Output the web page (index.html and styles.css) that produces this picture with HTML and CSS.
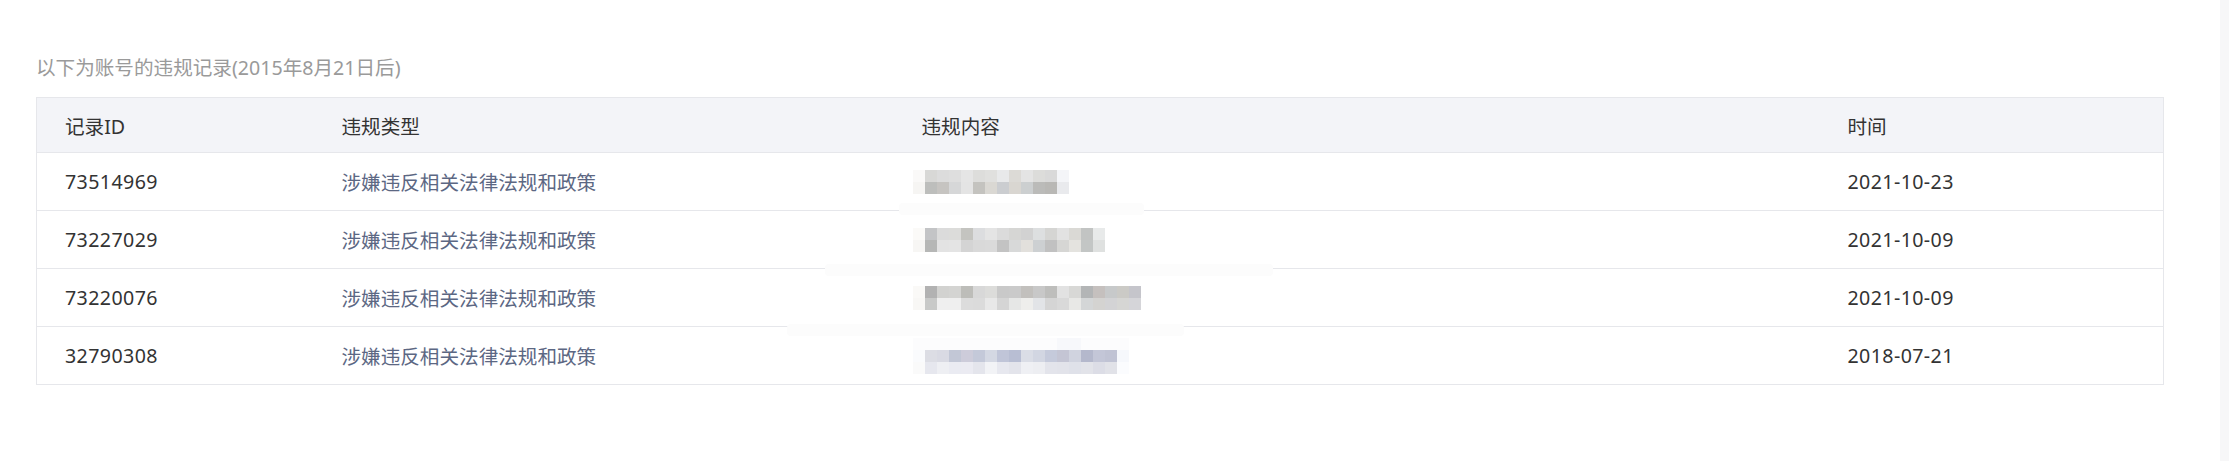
FILE: index.html
```html
<!DOCTYPE html>
<html lang="zh-CN">
<head>
  <meta charset="UTF-8">
  <meta name="viewport" content="width=device-width, initial-scale=1.0">
  <title>违规记录</title>
  <link rel="stylesheet" href="styles.css">
</head>
<body>
  <main class="page">
    <p class="notice">以下为账号的违规记录(2015年8月21日后)</p>

    <table class="record-table">
      <colgroup>
        <col class="col-id">
        <col class="col-type">
        <col class="col-content">
        <col>
      </colgroup>
      <thead>
        <tr>
          <th>记录ID</th>
          <th>违规类型</th>
          <th>违规内容</th>
          <th>时间</th>
        </tr>
      </thead>
      <tbody>
        <tr>
          <td class="num">73514969</td>
          <td class="type">涉嫌违反相关法律法规和政策</td>
          <td class="content">
            <svg class="blur" width="156" height="24" shape-rendering="crispEdges">
              <rect x="0" y="0" width="12" height="12" fill="#faf9f8"/>
              <rect x="12" y="0" width="12" height="12" fill="#d8d8d6"/>
              <rect x="24" y="0" width="12" height="12" fill="#dcdcdc"/>
              <rect x="36" y="0" width="12" height="12" fill="#dedede"/>
              <rect x="48" y="0" width="12" height="12" fill="#e5e5e5"/>
              <rect x="60" y="0" width="12" height="12" fill="#dddddb"/>
              <rect x="72" y="0" width="12" height="12" fill="#e0e0de"/>
              <rect x="84" y="0" width="12" height="12" fill="#e8e9ea"/>
              <rect x="96" y="0" width="12" height="12" fill="#dcdad6"/>
              <rect x="108" y="0" width="12" height="12" fill="#e4e4e4"/>
              <rect x="120" y="0" width="12" height="12" fill="#dcdcda"/>
              <rect x="132" y="0" width="12" height="12" fill="#d9d9d9"/>
              <rect x="144" y="0" width="12" height="12" fill="#f4f5f8"/>
              <rect x="0" y="12" width="12" height="12" fill="#f6f5f3"/>
              <rect x="12" y="12" width="12" height="12" fill="#bdbebc"/>
              <rect x="24" y="12" width="12" height="12" fill="#c6c4c1"/>
              <rect x="36" y="12" width="12" height="12" fill="#d6d7d8"/>
              <rect x="48" y="12" width="12" height="12" fill="#e4e4e4"/>
              <rect x="60" y="12" width="12" height="12" fill="#c4c3bf"/>
              <rect x="72" y="12" width="12" height="12" fill="#dad8d3"/>
              <rect x="84" y="12" width="12" height="12" fill="#cbcdd0"/>
              <rect x="96" y="12" width="12" height="12" fill="#d9d6d1"/>
              <rect x="108" y="12" width="12" height="12" fill="#cccfd0"/>
              <rect x="120" y="12" width="12" height="12" fill="#bbbbb9"/>
              <rect x="132" y="12" width="12" height="12" fill="#b9b8b5"/>
              <rect x="144" y="12" width="12" height="12" fill="#e9eaed"/>
            </svg>
            <span class="smudge smudge-1"></span>
          </td>
          <td class="num">2021-10-23</td>
        </tr>
        <tr>
          <td class="num">73227029</td>
          <td class="type">涉嫌违反相关法律法规和政策</td>
          <td class="content">
            <svg class="blur" width="192" height="24" shape-rendering="crispEdges">
              <rect x="0" y="0" width="12" height="12" fill="#fbfaf8"/>
              <rect x="12" y="0" width="12" height="12" fill="#c3c4c6"/>
              <rect x="24" y="0" width="12" height="12" fill="#dbdbdb"/>
              <rect x="36" y="0" width="12" height="12" fill="#dcdcda"/>
              <rect x="48" y="0" width="12" height="12" fill="#c4c4c0"/>
              <rect x="60" y="0" width="12" height="12" fill="#dcdddf"/>
              <rect x="72" y="0" width="12" height="12" fill="#e4e4e4"/>
              <rect x="84" y="0" width="12" height="12" fill="#dbdbdb"/>
              <rect x="96" y="0" width="12" height="12" fill="#d6d6d4"/>
              <rect x="108" y="0" width="12" height="12" fill="#d2d2d2"/>
              <rect x="120" y="0" width="12" height="12" fill="#dddfe0"/>
              <rect x="132" y="0" width="12" height="12" fill="#d5d5d3"/>
              <rect x="144" y="0" width="12" height="12" fill="#e2e2e2"/>
              <rect x="156" y="0" width="12" height="12" fill="#dad9d5"/>
              <rect x="168" y="0" width="12" height="12" fill="#c2c4c3"/>
              <rect x="180" y="0" width="12" height="12" fill="#e8eaea"/>
              <rect x="0" y="12" width="12" height="12" fill="#f7f6f4"/>
              <rect x="12" y="12" width="12" height="12" fill="#b6b7b6"/>
              <rect x="24" y="12" width="12" height="12" fill="#e3e3e3"/>
              <rect x="36" y="12" width="12" height="12" fill="#e4e4e4"/>
              <rect x="48" y="12" width="12" height="12" fill="#d4d4d4"/>
              <rect x="60" y="12" width="12" height="12" fill="#d9d9d9"/>
              <rect x="72" y="12" width="12" height="12" fill="#dadada"/>
              <rect x="84" y="12" width="12" height="12" fill="#c3c3c3"/>
              <rect x="96" y="12" width="12" height="12" fill="#d8d9d9"/>
              <rect x="108" y="12" width="12" height="12" fill="#e2e0dc"/>
              <rect x="120" y="12" width="12" height="12" fill="#cdd0d2"/>
              <rect x="132" y="12" width="12" height="12" fill="#c1c1c1"/>
              <rect x="144" y="12" width="12" height="12" fill="#d6d6d4"/>
              <rect x="156" y="12" width="12" height="12" fill="#e4e3df"/>
              <rect x="168" y="12" width="12" height="12" fill="#c3c6c5"/>
              <rect x="180" y="12" width="12" height="12" fill="#dfe1e0"/>
            </svg>
            <span class="smudge smudge-2"></span>
          </td>
          <td class="num">2021-10-09</td>
        </tr>
        <tr>
          <td class="num">73220076</td>
          <td class="type">涉嫌违反相关法律法规和政策</td>
          <td class="content">
            <svg class="blur" width="228" height="24" shape-rendering="crispEdges">
              <rect x="0" y="0" width="12" height="12" fill="#faf9f7"/>
              <rect x="12" y="0" width="12" height="12" fill="#b2b2b2"/>
              <rect x="24" y="0" width="12" height="12" fill="#d2d2d0"/>
              <rect x="36" y="0" width="12" height="12" fill="#d4d4d2"/>
              <rect x="48" y="0" width="12" height="12" fill="#bdbdb9"/>
              <rect x="60" y="0" width="12" height="12" fill="#d8d8d8"/>
              <rect x="72" y="0" width="12" height="12" fill="#dcdcda"/>
              <rect x="84" y="0" width="12" height="12" fill="#c9c9c9"/>
              <rect x="96" y="0" width="12" height="12" fill="#cacaca"/>
              <rect x="108" y="0" width="12" height="12" fill="#c2c0bd"/>
              <rect x="120" y="0" width="12" height="12" fill="#c8c8c8"/>
              <rect x="132" y="0" width="12" height="12" fill="#bebebc"/>
              <rect x="144" y="0" width="12" height="12" fill="#e2e2e2"/>
              <rect x="156" y="0" width="12" height="12" fill="#d8d8d6"/>
              <rect x="168" y="0" width="12" height="12" fill="#b3b5b6"/>
              <rect x="180" y="0" width="12" height="12" fill="#c5c0be"/>
              <rect x="192" y="0" width="12" height="12" fill="#c7c9ca"/>
              <rect x="204" y="0" width="12" height="12" fill="#cbcac6"/>
              <rect x="216" y="0" width="12" height="12" fill="#c5c5cb"/>
              <rect x="0" y="12" width="12" height="12" fill="#f8f7f5"/>
              <rect x="12" y="12" width="12" height="12" fill="#c8c9c8"/>
              <rect x="24" y="12" width="12" height="12" fill="#efefef"/>
              <rect x="36" y="12" width="12" height="12" fill="#efefef"/>
              <rect x="48" y="12" width="12" height="12" fill="#dcdcdc"/>
              <rect x="60" y="12" width="12" height="12" fill="#dbdbdb"/>
              <rect x="72" y="12" width="12" height="12" fill="#e8e8e8"/>
              <rect x="84" y="12" width="12" height="12" fill="#d5d5d5"/>
              <rect x="96" y="12" width="12" height="12" fill="#e6e7e6"/>
              <rect x="108" y="12" width="12" height="12" fill="#eeeeec"/>
              <rect x="120" y="12" width="12" height="12" fill="#e2e4e7"/>
              <rect x="132" y="12" width="12" height="12" fill="#d5d5d5"/>
              <rect x="144" y="12" width="12" height="12" fill="#d9d9d9"/>
              <rect x="156" y="12" width="12" height="12" fill="#e8e8e6"/>
              <rect x="168" y="12" width="12" height="12" fill="#d4d6d7"/>
              <rect x="180" y="12" width="12" height="12" fill="#d4d3d1"/>
              <rect x="192" y="12" width="12" height="12" fill="#d3d3d5"/>
              <rect x="204" y="12" width="12" height="12" fill="#d6d6d4"/>
              <rect x="216" y="12" width="12" height="12" fill="#d5d5d9"/>
            </svg>
            <span class="smudge smudge-3"></span>
          </td>
          <td class="num">2021-10-09</td>
        </tr>
        <tr>
          <td class="num">32790308</td>
          <td class="type">涉嫌违反相关法律法规和政策</td>
          <td class="content">
            <svg class="blur" width="216" height="36" shape-rendering="crispEdges">
              <rect x="0" y="0" width="216" height="12" fill="#fcfcfd"/>
              <rect x="144" y="0" width="24" height="12" fill="#f7f8fb"/>
              <rect x="0" y="12" width="12" height="12" fill="#fafbfd"/>
              <rect x="12" y="12" width="12" height="12" fill="#dcdde4"/>
              <rect x="24" y="12" width="12" height="12" fill="#d9dae3"/>
              <rect x="36" y="12" width="12" height="12" fill="#c2c7d6"/>
              <rect x="48" y="12" width="12" height="12" fill="#cdccda"/>
              <rect x="60" y="12" width="12" height="12" fill="#c4c9d9"/>
              <rect x="72" y="12" width="12" height="12" fill="#d4d8e3"/>
              <rect x="84" y="12" width="12" height="12" fill="#c0c5d8"/>
              <rect x="96" y="12" width="12" height="12" fill="#b8bed3"/>
              <rect x="108" y="12" width="12" height="12" fill="#dadde6"/>
              <rect x="120" y="12" width="12" height="12" fill="#d2d6e2"/>
              <rect x="132" y="12" width="12" height="12" fill="#c5cadb"/>
              <rect x="144" y="12" width="12" height="12" fill="#c4c5d4"/>
              <rect x="156" y="12" width="12" height="12" fill="#d0d3df"/>
              <rect x="168" y="12" width="12" height="12" fill="#b4b8cc"/>
              <rect x="180" y="12" width="12" height="12" fill="#c3c6d7"/>
              <rect x="192" y="12" width="12" height="12" fill="#c0c3d4"/>
              <rect x="204" y="12" width="12" height="12" fill="#f6f8fc"/>
              <rect x="0" y="24" width="12" height="12" fill="#fafafa"/>
              <rect x="12" y="24" width="12" height="12" fill="#e6e7ee"/>
              <rect x="24" y="24" width="12" height="12" fill="#eeeff3"/>
              <rect x="36" y="24" width="12" height="12" fill="#eaebf2"/>
              <rect x="48" y="24" width="12" height="12" fill="#ebebf2"/>
              <rect x="60" y="24" width="12" height="12" fill="#e4e5ec"/>
              <rect x="72" y="24" width="12" height="12" fill="#f2f3f6"/>
              <rect x="84" y="24" width="12" height="12" fill="#e7e8ef"/>
              <rect x="96" y="24" width="12" height="12" fill="#e3e4eb"/>
              <rect x="108" y="24" width="12" height="12" fill="#eff0f4"/>
              <rect x="120" y="24" width="12" height="12" fill="#edeef2"/>
              <rect x="132" y="24" width="12" height="12" fill="#e3e4eb"/>
              <rect x="144" y="24" width="12" height="12" fill="#e2e3ea"/>
              <rect x="156" y="24" width="12" height="12" fill="#dfe1e9"/>
              <rect x="168" y="24" width="12" height="12" fill="#e2e3e9"/>
              <rect x="180" y="24" width="12" height="12" fill="#dcdde6"/>
              <rect x="192" y="24" width="12" height="12" fill="#e1e2e8"/>
              <rect x="204" y="24" width="12" height="12" fill="#fbfcfe"/>
            </svg>
          </td>
          <td class="num">2018-07-21</td>
        </tr>
      </tbody>
    </table>
  </main>
  <div class="scroll-track"></div>
</body>
</html>
```

FILE: styles.css
```css
body {
  margin: 0;
  min-height: 100vh;
  display: flex;
  background: #fff;
  font-family: "Noto Sans", "Noto Sans CJK SC", sans-serif;
}

.page {
  flex: 1;
  padding: 54px 56px 0 36px;
}

.scroll-track {
  width: 9px;
  background: #f7f7f8;
}

.notice {
  margin: 0 0 15px;
  font-size: 19.6px;
  line-height: 28px;
  color: #9a9a9a;
}

.record-table {
  width: 100%;
  border-collapse: collapse;
  border: 1px solid #e6e7eb;
  font-size: 19.6px;
  color: #333;
}

.col-id {
  width: 277px;
}

.col-type {
  width: 580px;
}

.col-content {
  width: 926px;
}

.record-table th,
.record-table td {
  padding: 0 28px;
  text-align: left;
  font-weight: normal;
  border-bottom: 1px solid #e6e7eb;
}

.record-table th {
  height: 54px;
  background: #f3f4f8;
}

.record-table td {
  height: 57px;
}

.record-table td.num {
  letter-spacing: 0.4px;
}

.record-table td.type {
  color: #5c6783;
}

.record-table td.content {
  position: relative;
}

.blur {
  display: block;
  margin-left: -9px;
}

/* leftovers of the mosaic image spilling over the row lines */
.smudge {
  position: absolute;
  height: 12px;
  background: #fcfcfc;
  border-radius: 4px;
}

.smudge-1 {
  left: 5px;
  top: 50px;
  width: 245px;
}

.smudge-2 {
  left: -69px;
  top: 53px;
  width: 448px;
}

.smudge-3 {
  left: -107px;
  top: 55px;
  width: 397px;
}
```
